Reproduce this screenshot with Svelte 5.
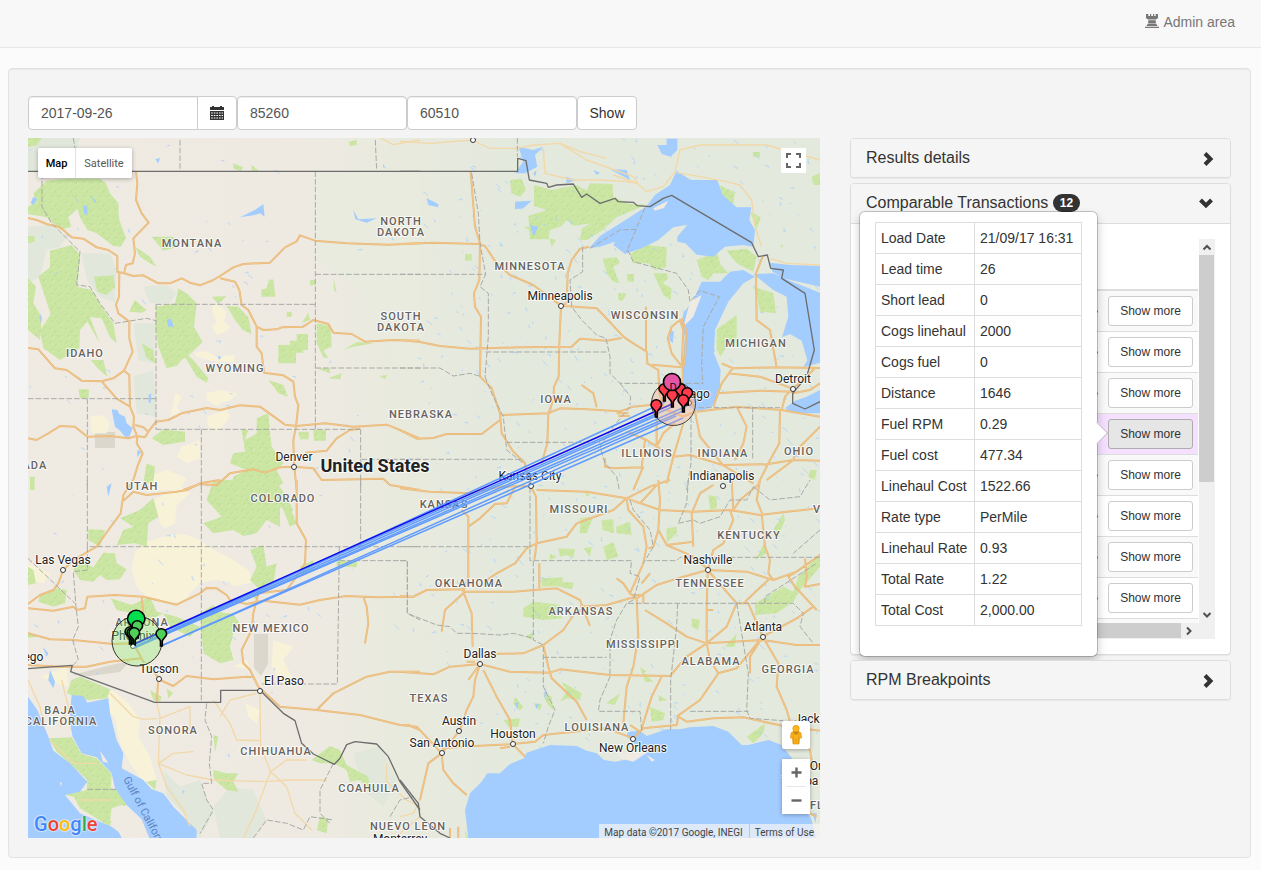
<script>
  const tiles = [
    'translate(0 130) scale(.33333)',
    'translate(400 130) scale(.33333)',
    'translate(0 480) scale(.33333)',
    'translate(400 480) scale(.33333)'
  ];

  const desert = [
    'M636 520L662 530 680 545 672 575 690 590 680 604 650 615 636 590 650 575 638 550ZM580 668L620 664 650 680 705 675 700 697 640 694 590 680ZM620 790L660 780 712 790 690 812 665 816 655 830 620 810ZM525 790L545 800 530 830 540 845 510 860 520 820ZM620 860L680 840 690 860 655 905 625 890ZM270 860L310 855 330 880 320 910 275 910ZM545 950L600 930 600 985 560 1000 530 980ZM440 1040L500 1020 560 1045 540 1080H450Z',
    '',
    'M405 215L440 185 520 162 560 165 600 180 640 210 690 235 745 270 760 305 700 320 690 305 640 300 600 310 570 340 550 370 500 365 440 350 410 320 395 270ZM460 60L540 20 570 40 530 75 525 130 495 145 480 130 470 90ZM290 640L340 632 385 670 420 720 415 770 450 830 470 900 430 905 390 850 360 790 345 715 315 680ZM700 560L740 540 750 570ZM820 480L880 500 850 540 880 600 840 600 815 560ZM120 590L200 560 205 620 170 610ZM735 670L780 690 770 730 745 710Z M84 250L150 280 130 310 84 300Z',
    ''
  ];
  const rough = [
    'M84 24L240 24 230 60 270 100 240 124 84 124ZM84 290L150 285 200 320 180 350 140 360 120 440 84 460ZM245 370L330 370 350 420 345 520 300 500 260 450ZM430 470L500 465 530 490 510 520 450 520ZM400 580L465 580 460 700 415 690ZM400 740L460 720 470 860 410 850Z',
    '',
    'M490 870L540 920 600 900 640 1000 600 1074 560 1010 500 950ZM690 920L760 930 800 1020 760 1074 660 1074 640 980ZM1060 820L1140 800 1190 900 1150 980 1090 930Z',
    ''
  ];
  const forest = [
    'M84 24H125L112 45 84 50ZM140 152L200 146 300 146 318 160 330 190 355 220 357 268 378 325 362 350 340 348 290 310 262 300 240 262 232 236 205 262 214 290 180 300 140 262 84 252 84 230 110 215 100 190ZM150 362L215 345 240 375 232 470 275 480 305 530 340 580 350 640 330 622 305 565 270 562 300 640 262 575 240 600 238 655 180 690 130 655 120 602 152 552 128 480 115 440 150 412ZM84 445L108 470 100 520 125 560 120 630 84 600ZM84 318H104V335L84 340ZM282 440L340 436 345 470 320 495 292 485ZM468 530L525 520 535 475 562 492 590 520 582 590 608 636 570 672 545 690 530 708 500 715 475 650 466 590ZM540 655L580 690 625 745 620 758 590 740ZM680 528L715 530 745 562 755 612 728 600 705 570ZM404 510L440 540 425 548 388 545ZM455 320L520 320 535 350 490 362ZM405 350L450 380 470 410 450 400 420 380ZM635 500L680 498 655 522ZM784 480L800 475 806 450 820 448 826 500 784 500ZM835 645H870V632H890V612H924V660H910V668H888V700H835ZM950 580L992 588 995 650 970 660 985 685 970 682 950 640ZM930 450H945V466H930ZM860 546H875V560H860ZM905 580L925 548 930 570ZM1000 440L1010 490 1002 480ZM1030 660L1070 636 1120 640 1060 650ZM950 715H990V730ZM985 745L1025 730 1020 748ZM1138 738L1162 735 1155 748ZM700 100L730 112 722 124 700 115ZM755 105L778 124H755ZM1045 35L1070 30 1070 45 1050 48ZM805 750L850 765 864 800 835 790ZM272 690L310 690 322 740 290 712ZM235 778H266V804H240ZM455 925L490 898 555 905 555 935 490 945ZM725 900H745L735 930 770 910 770 865 805 850 810 905 815 950 850 1000 830 1020 850 1060 810 1080H690L700 1040 740 1020 690 1000 700 970 735 965ZM895 905H926V928H900ZM940 900H978V932H942ZM440 1000L465 1010 460 1060 430 1060ZM90 1040H104V1080H90ZM425 640L460 660 466 700 440 685Z',
    'M330 150L365 146 378 180 360 200 334 190ZM402 165L455 180 530 165 560 182 570 160 638 162 640 200 690 222 738 224 650 262 608 300 560 330 540 330 545 296 572 280 520 288 500 270 482 290 450 300 445 328 390 328 385 258 440 240 402 228ZM448 325L468 330 455 350ZM370 290H388V300ZM608 386L650 382 660 398 640 410 658 460 640 455 620 430ZM690 372L740 345 800 352 798 412 765 420 745 400 700 400ZM760 430H800L805 445 788 460 815 475 812 510 790 495ZM680 432H702V455H684ZM655 490L680 490 668 512 655 510ZM890 390L950 365 962 405 985 430 940 430 925 450 905 440ZM980 362L1040 356 1070 380 1060 425 1010 400ZM950 598L1010 555 1010 640 985 640 962 680 950 660ZM1060 470L1120 490 1128 550 1080 545 1072 500ZM958 165L1005 188 1000 222 975 215ZM1050 245L1082 262 1070 300ZM1058 66H1080V82H1060ZM1235 140L1260 130V165H1240ZM195 372H215V392H195ZM760 235L805 212 790 232 762 242ZM1230 1020L1250 1020 1245 1050 1225 1040ZM1145 340L1150 350 1140 352Z',
    'M640 0H825L860 50 880 90 870 105 840 80 840 140 800 120 770 160 730 168 700 150 640 160 610 130 665 110 620 60ZM830 30L860 60 890 130 870 140 850 90ZM460 55L475 110 445 130 440 200 405 190 350 195 370 150 400 140 360 115 420 90ZM265 148L315 150 300 200 265 180ZM120 345L170 325 200 330 195 370 160 380 115 365ZM232 240L280 262 310 218 345 220 350 250 380 268 360 298 320 300 300 285 280 305 240 300 220 270ZM600 400L640 375 655 395 700 402 725 440 700 460 690 500 700 540 660 550 610 520ZM332 355L395 375 450 350 470 395 530 410 600 440 570 470 510 440 490 400 430 430 400 400 350 390ZM750 210L790 195 800 260 830 250 820 310 780 330 750 300 770 260ZM745 340L780 340 770 360ZM900 260L940 240 940 270 905 285ZM1010 240L1072 245 1070 262 1010 258ZM240 590L330 628 322 655 260 660 200 640 215 600ZM450 630L485 650 480 665 460 660ZM500 625L520 640 505 655ZM145 775L215 772 245 822 290 835 335 882 333 925 352 930 380 975 340 990 330 1040 240 985 222 950 195 945 260 930 262 900 210 850 170 815ZM84 260L100 270 108 310 84 315ZM640 870L680 880 715 880 700 905 715 935 680 930 650 905 640 890ZM640 765L655 770 645 815ZM935 840L990 798 1020 810 1040 855 1105 890 1110 930 1080 900 1050 905 1040 870 1000 850 960 850ZM960 1010L985 1015 980 1060 950 1050ZM300 812L325 850 310 845ZM440 905L470 900 465 930ZM84 455L110 470 84 475Z',
    'M540 115L580 110 560 160H540ZM605 120L640 118 642 160 608 150ZM648 140L690 125 695 165 650 160ZM475 205L525 208 520 235 500 225 480 230ZM550 205L575 200 570 230ZM610 200L640 185 655 230 620 240ZM450 222L470 230 450 240ZM425 295L490 292 485 305 522 308 515 328 470 318 425 320ZM370 385L400 365 445 370 480 375 470 400 490 415 430 420 370 410ZM375 470L400 455 396 480ZM345 650L370 680 360 690 340 672ZM310 720L360 715 355 740 325 740ZM485 605L545 640 540 660 500 655 480 665 500 635ZM430 640L455 650 460 690 440 670ZM400 670L425 672 420 692ZM618 670L660 640 645 675ZM750 680L795 700 790 720 755 725ZM775 645L800 660 778 665ZM725 570L760 605 735 605ZM875 415L900 420 895 450 875 440ZM800 145L830 140 830 160 800 190ZM925 45L950 50 950 85 930 90ZM1065 240L1095 185 1100 220ZM1120 150L1150 100 1155 120 1135 170ZM1065 370L1150 320 1180 335 1195 290 1260 220V260L1200 330 1180 365 1130 400 1065 405ZM975 500L1010 460 1005 500ZM1040 770L1095 730 1090 760 1060 790ZM555 35L570 45 560 50ZM195 1050L205 1074H198ZM720 560L740 575 725 580Z'
  ];
  const water = [
    'M335 838L352 840 358 852 375 860 380 880 398 895 388 920 375 920 358 900 345 890ZM250 225L262 230 262 256 252 250ZM100 200L112 208 100 225 92 220ZM768 238L790 222 794 260 780 250 760 256 720 262 740 252ZM446 795L454 790 452 820 446 816ZM500 570L512 566 522 590 505 590ZM412 960L424 965 412 982ZM466 88L480 84 475 100ZM270 195L290 215 285 218ZM1060 240L1075 268 1130 265 1100 278 1066 268ZM120 550L126 565 122 580ZM652 678L664 680 658 690ZM785 605L770 600Z',
    'M567 355L600 318 680 268 738 230 765 195 810 165 830 122 872 150 952 150 968 195 1010 232 1054 232 1048 270 1065 300 1060 350 1030 345 975 350 940 380 890 374 856 340 832 335 832 320 862 284 820 292 775 330 725 355 675 372 640 345 645 335 600 350ZM1065 440L1030 420 990 425 960 455 905 455 880 510 850 550 845 580 855 620 848 700 850 790 872 835 900 845 935 830 958 790 962 720 942 670 945 600 985 515 1030 460ZM1108 398L1170 405 1260 408V470L1150 445 1118 425ZM1060 432L1120 430 1150 445 1215 470 1260 488V698L1210 712 1222 690 1205 632 1170 612 1146 622 1165 560 1160 500 1120 480ZM1155 835L1185 812 1220 800 1260 780V850L1180 850ZM355 50L400 60 430 50 405 75 412 110 375 130 345 130 370 95ZM772 45H800V26H832V60L812 80 785 72ZM80 205L115 222 115 232 85 225ZM345 215L395 212 370 235 345 238ZM390 285L415 290 400 320ZM810 600L822 605 818 640 808 630ZM498 140L530 150 500 160ZM580 120L600 128 590 135ZM630 118L680 120 690 150ZM480 540L488 545ZM400 130L410 120 405 140Z',
    'M84 650L112 690 145 770 160 812 210 850 262 905 240 935 195 945 240 1000 335 1040 380 1074H84ZM215 645L250 648 262 668 325 655 330 700 350 780 370 820 365 865 430 900 455 928 490 940 520 980 590 1050 590 1074H448L425 1018 380 975 345 925 335 880 290 832 245 820 218 770 208 720ZM150 570L165 605 160 625 145 600ZM320 20L335 10 325 50ZM128 500L145 520 140 530ZM548 930L554 935 548 942ZM684 820L690 828 686 832Z',
    'M205 1074L195 990 210 940 245 905 262 880 300 880 330 852 372 835 380 818 450 795 530 798 560 812 590 820 612 840 645 845 700 835 725 820 700 785 680 770 684 755 720 752 740 768 800 748 840 748 870 742 940 738 985 755 1025 795 1045 795 1105 780 1145 795 1180 840 1200 950 1235 1020 1248 1074ZM345 670L355 665 352 690ZM405 675L418 670 410 688ZM435 625L442 640 432 655ZM1238 1000L1250 1000 1246 1030Z'
  ];
  const land = [
    '',
    'M870 515L905 495 880 560 850 590ZM760 235L805 212 792 234 764 242ZM1100 375L1112 380 1110 400 1100 398Z',
    'M368 840L385 838 385 860 372 868ZM180 905L186 910 182 920ZM300 812L325 848 308 845ZM335 985L365 975 405 1000 415 1040 445 1074H365L345 1035 330 1020Z',
    'M650 820L690 815 715 800 745 815 700 845 660 835ZM740 825L765 840 755 845Z'
  ];
  const minor = [
    'M1140 24L1180 44 1260 30',
    'M0 34L90 40 215 30 270 55 350 55 400 45 480 40 540 65 620 85M430 55L435 130 520 150 600 150 680 155 712 160M640 135L712 160 740 185 790 170 825 125 840 60 900 45 1100 45 1260 90M830 128L900 140 980 155 1020 165 1055 210 1065 290 1085 350M1110 385L1160 400 1260 405M480 40L560 90 700 140 714 160',
    'M470 665L480 710 475 850 560 885 640 900 800 905 860 900 980 900M330 640L400 710 430 718 475 715M640 660L690 730 710 780 782 782M770 640L690 660 660 710M780 640L782 800 812 875 800 905 765 1000 730 1074M812 875L860 920 885 1000 935 1050M475 850L500 920 550 990 570 1040M480 715L570 680 570 750M812 875L860 840 920 840M475 850L520 820 580 815M150 780L220 850 290 850M240 960L330 960M84 600L120 680 130 730M1160 850L1160 905 1220 960 1260 980M185 600L205 680 180 740',
    'M0 1010L40 1000 60 960M0 1060L60 1010'
  ];
  const roads = [
    'M84 264L110 270 140 282 180 292 215 322 250 326 290 352 325 360 352 378 352 425 372 430 400 438 430 436 475 460 510 460 545 445 570 458 600 466 640 450 660 438 700 412 730 402 810 398 855 352 890 334 900 316 945 332 1040 340 1165 344 1260 340M408 124L412 160 408 210 425 250 446 278 400 325 405 370 398 400 378 405 372 430M358 430L357 500 348 524 355 550 388 575 388 625 398 665 372 722 388 735 390 830 402 860 400 890 412 920 410 940 428 970 412 1010 400 1050M84 654L115 658 165 715 200 720 245 752 305 754 340 745 372 722M305 754L350 806 390 830M84 925L110 930 145 910 180 888 225 890 262 920 330 918 385 925 410 918 435 922 445 905 468 875 505 870 545 850 620 834 660 840 720 826 780 830 855 884 890 888 975 880 1060 890 1160 884 1200 900 1260 926M405 885L430 892 445 905M660 445L705 455 718 480 725 525 745 540 770 590 770 650 785 670 792 728 850 736 880 755 885 800 895 826 888 890 880 930 882 1000 890 1080M770 590L790 600 830 598 845 592 910 590 940 570 985 582 1000 608 1055 612 1095 635 1180 630 1260 632M915 968L980 962 1010 925 1050 900 1080 896M882 1010L940 1015 965 1050 1150 1046 1170 1065 1260 1080M882 1010L840 1012 795 1028 760 1018 690 1030 650 1066 600 1062 550 1080',
    'M0 342L100 338 235 342 255 348 290 400 330 435 400 465 440 495 483 527M0 630L60 636 120 648 210 656 360 652 515 650 540 626 620 632 665 624M212 124L218 200 225 290 240 340 238 450 222 490 225 530 243 560 240 740 275 775 300 850 305 910 340 965 375 1000 378 1020 392 1068M483 527L478 640 476 740 462 770 460 810 445 850 442 940 425 1000M567 350L540 356 515 390 503 430 500 520 483 527M483 527L590 535 610 555 670 620 700 640 740 665 742 700 775 720 778 790 790 830M738 530V665M755 704L845 712 850 600 840 570 815 590 803 625 815 670 842 705M845 565L858 600 856 680 848 720 850 800M305 855L445 850 480 835 560 838 660 844 700 830 750 825M0 900L50 926 100 924 140 912 245 912 300 870M545 765L580 790 590 832M680 905L740 930 770 950M890 845L1010 830 1145 840 1260 860M1140 840L1138 940 1105 1000 1075 1060M885 845L900 920 968 1005 1060 1060M968 1005L1100 1003 1180 990 1260 992M940 830L965 760 1000 712M965 700L1000 715 1130 712 1260 714M985 730L1080 740 1178 776M1130 712L1110 600 1070 570 1068 430 1088 380M950 790L1080 782 1178 785M1178 776L1155 800 1145 840M1178 776L1220 740 1245 714M770 850V950M850 880L820 980 800 1060M615 985V1010L640 1015 725 1012 735 930M730 1010L700 1080M770 950L820 980 870 975 968 1005M825 880L790 910 770 950M1260 890L1190 960 1180 990 1100 1050M1010 830L1040 890 1030 940 1005 990M870 800L885 845 850 860 800 840M1178 790L1230 780 1260 760M650 850H685M655 858H690',
    'M400 0L370 45 362 100 325 150 290 200 220 240 190 270 175 310 160 330 120 345 84 372M370 62L400 35 440 45 530 35 560 30 600 10 660 0M84 385L160 392 220 380 230 390 255 385 262 350 345 345 430 350 530 374 600 340 620 324 650 325 680 345 690 360 740 372 790 362 900 374 960 360 1040 348 1130 352 1240 350 1260 340M890 0L890 130 918 180 915 250 890 290 860 330 775 340 760 400 755 450 725 510 730 550 750 570 775 620 840 680 950 690 1080 705 1200 735 1225 735 1260 750M950 690L1000 640 1100 590 1170 575 1260 575M84 460L150 478 220 480 340 492 400 490 430 545 465 580 480 600 520 618 560 588 640 598 740 590 760 592 775 620M84 555L180 560 260 560 330 545 425 535M425 350L430 400 400 490M475 600L470 665M1090 350L1100 380 1105 430 1095 490',
    'M0 25L90 35 210 40 300 20 392 18M410 30L560 35 680 55 780 90 880 95 990 90 1080 105 1160 95 1260 85M185 90L205 110 205 290 190 335 215 400 218 500M205 140L240 115 285 72 320 70 345 20M392 18L408 50 410 190 403 240M410 190L500 170 530 130 640 90 680 55M410 190L380 205 345 250 290 280 260 300M0 348L40 350 80 330 190 328M190 335L340 335 405 330 470 325 540 360 555 400 570 438M418 250V325M540 380L620 375 690 355 710 355M190 340L135 390 125 455M680 55L685 90 730 140 740 200 730 250 690 340 710 355 715 470 700 560 680 620 670 730M725 310L750 280M650 295L670 310 690 340M775 0L780 60 775 150 760 200 745 205M775 150L800 195 880 230 920 265M680 55L750 20 810 0M680 55L720 70 775 10M0 575L100 583 150 560 240 552 330 575 450 578 480 568 630 585 810 588 860 530 920 490M270 522L370 520 430 495 445 560 455 595 530 665 560 720M430 495L490 450 520 405 550 385M240 552L225 600 220 650 200 690 180 750 125 820 85 850 60 960M250 570L290 650 330 720 338 792M125 820L130 870 160 910 200 945M0 735L50 740 125 820M125 805L225 798 338 792 405 785 430 765 570 750 620 745 700 775 730 745 830 735 835 710 860 725 940 715 1030 712 1150 738 1260 752M338 792L375 830M725 745L755 650 785 590M830 710L900 660 955 580 1010 565 1088 470M923 280L920 390 920 490 930 540 955 580M920 490L860 470 800 430 735 390M920 490L1088 480 1190 495 1260 495M710 355L770 315 850 290 923 270 1040 275 1120 300 1190 275 1260 225M990 90L1000 120 970 190 940 210 923 270M1085 100L1095 200 1110 240 1105 280 1120 300M923 270L1010 370 980 440 920 490M1010 370H1045L1088 470M1035 365L1110 295M1088 470L1135 550 1130 620 1160 690 1180 760 1230 810 1240 870M1088 470L1190 415 1240 380M1088 470L1050 530 1050 580M1190 275L1165 290 1185 320 1250 390M1215 235L1220 290 1215 320 1260 312M880 185L800 195M1000 90L995 0M1080 0L1070 60 1088 105M880 200L875 100 900 40 940 15M917 390H940M690 735L720 755M150 1074V1045M175 1074V1040M1080 10L1020 60 1000 90M700 345H730V370M200 545H225M240 552L205 600M300 805L330 800M1230 1000L1250 1010'
  ];
  const borders = [
    'M540 30V122M1126 30L1130 122M220 24L225 55M946 124V898M468 523H946M468 523V898M84 806H468M468 898H1082M262 806V1080M604 898V1080M1082 898V988H1260M946 714H1260M946 433H1260M1082 988V1080M126 130V230L155 280 180 305 240 365 230 465 270 470 300 520 345 580 440 565 468 572',
    'M0 433H257L240 470 265 490 265 620 255 740M257 666H622M0 714H120L160 738 210 730 245 740M215 130L235 250 240 340 257 433M548 350V425L510 450 515 530 545 570 590 615 618 625 630 680 630 730 660 760H910M660 760L692 800 690 825M690 830L640 890 600 950 615 1000 650 1040 658 1080M320 937H600M255 740L275 790 310 860 320 960 370 1000M0 988H370M683 360L700 395 830 430 865 480 870 515 900 482 958 500 910 590 905 700 908 760M873 860V1000L860 1080M1058 830V990M895 833H1140M352 24V80M570 355L660 300 708 298 735 232M708 298L680 365',
    'M262 0V200H1260M262 200V270L220 275 228 380 235 440 218 480 235 540 215 560M84 235L225 370M604 0V665M1082 0V200M1018 200L1012 612H780M1018 242H1222V400L1260 420M620 670L615 720 635 770 628 850 635 910 605 910 620 960 640 990 600 1060M262 928H350M1000 850L960 930 960 1000 990 1030M760 1074L800 1020 860 1030 910 1050 930 1010 1000 1020M1170 1010L1200 960 1240 950',
    'M0 200H390M390 0V242H695L690 280 720 290 700 360 680 370M400 242V480L430 495V620L465 690 445 740 430 790M0 242H22V400L110 435 150 440 170 460 215 460 300 465 340 460 400 475M430 532H620M680 370L650 420 630 480 630 590 600 660 595 694H720L725 750M685 370H1180L1210 400 1200 440 1240 490M833 370L830 440 812 600 812 750M1010 370L1045 580 1040 690 1050 715 1150 722M870 694H1045M740 242H830L840 232H1260M690 60L700 90 750 150 760 200 730 250M835 130L880 120 900 130 960 110 990 60 1040 60 1060 20M865 0L860 70 835 130M1060 20L1110 60 1200 50 1230 0M1095 370V350L1250 250M1260 150L1180 220'
  ];
  const nation = [
    'M84 124H1260',
    'M0 124H353V85L378 92 388 150 440 160 445 172 470 165 520 162 545 202 560 192 600 220 645 205 655 215 700 217 712 227 750 230 790 205 815 196 1055 338 1075 380 1102 375 1112 415 1150 420 1145 445 1215 490 1243 660 1220 740 1178 790 1178 820 1215 837 1260 815',
    'M84 566L217 556 212 575 464 667H662V631H780L850 700 885 722 905 790 940 822 1003 853 1020 835 1040 794 1065 785 1130 792 1165 830 1200 905 1260 990',
    'M0 900L55 970 60 1010 120 1060 150 1074'
  ];

  let seed = 11;
  const rnd = () => (seed = (seed * 16807) % 2147483647) / 2147483647;
  let creeks = '';
  for (let i = 0; i < 620; i++) {
    const x = i % 6 ? 420 + rnd() * 400 : 30 + rnd() * 400;
    const y = 138 + rnd() * (x > 460 ? 610 : 560);
    const dx = rnd() * 5 - 1;
    const dy = rnd() * 6 - 2;
    creeks += `M${x.toFixed(1)} ${y.toFixed(1)}l${dx.toFixed(1)} ${dy.toFixed(1)}l${(dy / 2).toFixed(1)} ${(dx / 2).toFixed(1)}`;
  }

  const under = [
    ['desert', desert], ['rough', rough], ['forest', forest]
  ];
  const over = [
    ['water', water], ['land', land], ['minor', minor],
    ['road-case', roads], ['road', roads], ['border', borders], ['nation', nation]
  ];

  const states = [
    ['MONTANA', 192, 247], ['NORTH', 401, 225], ['DAKOTA', 401, 236], ['SOUTH', 401, 320], ['DAKOTA', 401, 331],
    ['IDAHO', 85, 357], ['WYOMING', 235, 372], ['NEBRASKA', 421, 418], ['MINNESOTA', 530, 270], ['WISCONSIN', 645, 319],
    ['MICHIGAN', 756, 347], ['IOWA', 556, 403], ['ILLINOIS', 647, 457], ['INDIANA', 723, 457], ['OHIO', 799, 455],
    ['UTAH', 142, 490], ['COLORADO', 283, 502], ['KANSAS', 444, 508], ['MISSOURI', 579, 513], ['KENTUCKY', 749, 539],
    ['OKLAHOMA', 469, 587], ['ARKANSAS', 581, 615], ['TENNESSEE', 710, 587], ['MISSISSIPPI', 643, 648], ['ALABAMA', 711, 665],
    ['GEORGIA', 788, 673], ['ARIZONA', 142, 626], ['NEW MEXICO', 271, 632], ['TEXAS', 429, 702], ['LOUISIANA', 597, 731],
    ['BAJA', 60, 714], ['CALIFORNIA', 61, 725], ['SONORA', 173, 734], ['CHIHUAHUA', 276, 755], ['COAHUILA', 369, 792],
    ['NUEVO LEON', 408, 830], ['NEVADA', 23, 469], ['V', 817, 513], ['FL', 817, 809]
  ];
  const cities = [
    ['Minneapolis', 560, 300, 561, 306], ['Denver', 294, 461, 294, 467], ['Kansas City', 530, 480, 531, 486],
    ['Indianapolis', 722, 480, 723, 486], ['Detroit', 793, 383, 793, 389], ['Chicago', 688, 398, 689, 403],
    ['Las Vegas', 63, 564, 63, 570], ['Phoenix', 133, 640, 133, 646], ['Tucson', 159, 673, 159, 679],
    ['El Paso', 284, 685, 260, 691], ['Dallas', 480, 658, 480, 664], ['Austin', 459, 725, 459, 731],
    ['San Antonio', 442, 747, 442, 753], ['Houston', 513, 738, 513, 744], ['New Orleans', 633, 752, 633, 739],
    ['Nashville', 708, 564, 708, 570], ['Atlanta', 763, 631, 763, 637], ['Monterrey', 400, 843, 420, 860],
    ['Diego', 28, 661, 10, 668], ['', 0, 0, 473, 140], ['Jacks', 810, 723, 840, 723], ['Or', 816, 770, 840, 770], ['Tampa', 800, 785, 840, 785]
  ];

  const lanes = [
    [133, 648, 665, 402], [131, 646, 672, 407], [134, 647, 656, 416], [136, 647, 683, 411],
    [134, 648, 687, 406], [161, 646, 683, 418], [161, 646, 676, 416]
  ];
  const redPins = [[664, 389], [680, 389], [687, 393], [672, 395], [683, 400], [656, 405]];
  const greenPins = [[137, 626], [130, 632], [132, 633], [134, 633], [161, 634]];

  const details = [
    ['Load Date', '21/09/17 16:31'], ['Lead time', '26'], ['Short lead', '0'], ['Cogs linehaul', '2000'],
    ['Cogs fuel', '0'], ['Distance', '1646'], ['Fuel RPM', '0.29'], ['Fuel cost', '477.34'],
    ['Linehaul Cost', '1522.66'], ['Rate type', 'PerMile'], ['Linehaul Rate', '0.93'],
    ['Total Rate', '1.22'], ['Total Cost', '2,000.00']
  ];

  let date = $state('2017-09-26');
  let origin = $state('85260');
  let destination = $state('60510');
  let active = $state(3);
</script>

{#snippet chevron()}
  <svg class="chev" viewBox="0 0 14 16" aria-hidden="true"><path d="M4 2.500L9.500 8 4 13.500" /></svg>
{/snippet}

<nav>
  <a href="#admin">
    <svg width="14" height="14" viewBox="0 0 14 14" aria-hidden="true">
      <path fill="currentColor" d="M1 0H3.300V2H5V0H6.200V2H8V0H9.200V2H10.700V0H13V4L11 5.500H3L1 4ZM3.200 6.200H10.800V9H3.200ZM3 9.600H11L12.600 11.900H1.400ZM0 12.700H14V14H0Z" />
    </svg>
    Admin area
  </a>
</nav>

<main>
  <form onsubmit={(e) => e.preventDefault()}>
    <div class="date">
      <input type="text" aria-label="Date" bind:value={date} />
      <button type="button" aria-label="Open calendar">
        <svg width="14" height="14" viewBox="0 0 14 14" aria-hidden="true">
          <path fill="#333" d="M0 1H2V0H4V1H10V0H12V1H14V4H0ZM0 5H14V14H0Z" />
          <path stroke="#fff" stroke-dasharray="1.600 1" d="M1.200 7H13M1.200 9.500H13M1.200 12H13" />
        </svg>
      </button>
    </div>
    <input type="text" aria-label="Origin" bind:value={origin} />
    <input type="text" aria-label="Destination" bind:value={destination} />
    <button class="show" type="submit">Show</button>
  </form>

  <div class="row">
    <section class="col map-col">
      <div class="map">
        <svg class="canvas" viewBox="28 138 792 700" preserveAspectRatio="xMidYMid slice" role="img" aria-label="Map">
          <defs>
            <linearGradient id="ground" x1="0" x2="1" y1="0" y2="0">
              <stop offset="0" stop-color="#efebe3" />
              <stop offset=".36" stop-color="#eeeae2" />
              <stop offset=".46" stop-color="#e9eade" />
              <stop offset=".64" stop-color="#e3e9dd" />
              <stop offset="1" stop-color="#e3e9dd" />
            </linearGradient>
            <pattern id="wood" width="48" height="42" patternUnits="userSpaceOnUse">
              <rect width="48" height="42" fill="#cae6a2" />
              <path d="M4 10l7-6M20 20l6-9M36 8l5-4M8 32l8-6M32 36l7-9M26 30l3-3" stroke="#bedb95" stroke-width="3" fill="none" />
              <path d="M8 14l6-6M38 13l4-5M14 37l5-5M38 39l6-8" stroke="#d5ecb5" stroke-width="3" fill="none" />
            </pattern>
          </defs>
          <rect x="28" y="138" width="792" height="700" fill="url(#ground)" />
          <path d="M315 172H420V368H400L360 290 315 260Z" fill="#e8ebdf" opacity=".8" />
          <path d="M254 634h14v30l-7 12-7-8ZM72 675L115 664 130 661 120 672 90 676ZM95 432h20v16h-20z" fill="#dcd7cc" />
          {#each under as [name, parts]}
            {#each parts as d, i}<path class={name} {d} transform={tiles[i]} />{/each}
          {/each}
          <path class="creek" d={creeks} />
          {#each over as [name, parts]}
            {#each parts as d, i}<path class={name} {d} transform={tiles[i]} />{/each}
          {/each}
          {#each cities as [name, x, y, cx, cy]}
            <circle class="town" {cx} {cy} r="2.500" />
            <text class="city" {x} {y}>{name}</text>
          {/each}
          {#each states as [name, x, y]}<text class="state" {x} {y}>{name}</text>{/each}
          <text class="country" x="375" y="472">United States</text>
          <text class="sea" transform="translate(123 779) rotate(62)">Gulf of California</text>

          {#each lanes as [x1, y1, x2, y2]}<line class="lane" {x1} {y1} {x2} {y2} />{/each}
          <line class="lane main" x1="134" y1="644" x2="672" y2="404" />
          <circle cx="673.500" cy="403.500" r="22" fill="#ffb199" fill-opacity=".35" stroke="#444" />
          <circle cx="137" cy="641" r="25" fill="#8fee70" fill-opacity=".35" stroke="#333" />
          {#each redPins as [x, y]}
            <path class="pin" fill="#ff3b4d" d="M{x - 5} {y}a5.300 5.300 0 1 1 10.600 0c0 3-3.800 4.500-4.300 7v5h-1.800v-5c-.5-2.500-4.500-4-4.500-7z" />
          {/each}
          <circle class="pin" cx="672" cy="382" r="8.500" fill="#e456a5" />
          <text class="letter" x="673" y="391">D</text>
          <path class="pin" fill="#00e04f" d="M127.500 619a8.700 8.700 0 1 1 17.400 0c0 5-7 8-7.700 15h-2c-.7-7-7.700-10-7.700-15z" />
          {#each greenPins as [x, y]}
            <path class="pin" fill="#4fd159" d="M{x - 5} {y}a5.300 5.300 0 1 1 10.600 0c0 3-3.800 4.500-4.300 7v5h-1.800v-5c-.5-2.500-4.500-4-4.500-7z" />
          {/each}
          <circle cx="133" cy="646" r="1.500" fill="#fff" />
        </svg>

        <div class="types">
          <button type="button" class="on">Map</button><button type="button">Satellite</button>
        </div>
        <button type="button" class="full" aria-label="Toggle fullscreen">
          <svg width="15" height="15" viewBox="0 0 15 15" aria-hidden="true">
            <path d="M1 5V1H5M10 1H14V5M14 10V14H10M5 14H1V10" fill="none" stroke="#666" stroke-width="2" />
          </svg>
        </button>
        <div class="controls">
          <button type="button" class="peg" aria-label="Street View">
            <svg width="14" height="20" viewBox="0 0 14 20" aria-hidden="true">
              <path d="M4 6.500L10 6.500 12 8 12.500 13H10.500L10 19H4L3.500 13H1.500L2 8Z" fill="#fbb117" stroke="#d98c0c" stroke-width=".6" />
              <path d="M4 7H10L7 10ZM4.200 8L4.500 18M9.800 8L9.500 18M7 13V18" fill="#c77f12" stroke="#d9900f" stroke-width=".6" />
              <circle cx="7" cy="3.500" r="3.200" fill="#fcb81b" stroke="#d98c0c" stroke-width=".6" />
            </svg>
          </button>
          <div class="zoom">
            <button type="button" aria-label="Zoom in"><svg width="11" height="11" viewBox="0 0 11 11"><path d="M5.500 0.500V10.500M.5 5.500H10.500" stroke="#666" stroke-width="2.400" /></svg></button>
            <button type="button" aria-label="Zoom out"><svg width="11" height="11" viewBox="0 0 11 11"><path d="M.5 5.500H10.500" stroke="#666" stroke-width="2.400" /></svg></button>
          </div>
        </div>
        <a class="logo" href="#maps"><span class="b">G</span><span class="r">o</span><span class="y">o</span><span class="b">g</span><span class="g">l</span><span class="r">e</span></a>
        <div class="credits"><span>Map data ©2017 Google, INEGI</span><a href="#terms">Terms of Use</a></div>
      </div>
    </section>

    <section class="col side">
      <div class="panel">
        <button type="button" class="head">Results details {@render chevron()}</button>
      </div>
      <div class="panel open">
        <button type="button" class="head"><span>Comparable Transactions <b class="badge">12</b></span> {@render chevron()}</button>
        <div class="body">
          <div class="scroller">
            <div class="view">
              <table class="rows">
                <thead><tr><th></th></tr></thead>
                <tbody>
                  {#each Array(9) as _, i}
                    <tr class:active={i === active}>
                      <td>
                        <div class="cell">
                          {#if i !== active}<svg width="2" height="3" viewBox="0 0 2 3" aria-hidden="true"><circle cx=".8" cy="1.500" r="1.200" fill="#4ba3d6" /></svg>{/if}
                          <button type="button" onclick={() => (active = i)}>Show more</button>
                        </div>
                      </td>
                    </tr>
                  {/each}
                </tbody>
              </table>
            </div>
            <div class="vbar">
              <svg viewBox="0 0 16 16" aria-hidden="true"><path d="M4.500 10.500L8 7 11.500 10.500" /></svg>
              <i></i>
              <svg class="end" viewBox="0 0 16 16" aria-hidden="true"><path d="M4.500 6L8 9.500 11.500 6" /></svg>
            </div>
            <div class="hbar">
              <i></i>
              <svg viewBox="0 0 16 16" aria-hidden="true"><path d="M6 4.500L9.500 8 6 11.500" /></svg>
            </div>
          </div>
        </div>
        <div class="popover" role="tooltip">
          <table>
            <tbody>
              {#each details as [name, value]}
                <tr><td>{name}</td><td>{value}</td></tr>
              {/each}
            </tbody>
          </table>
        </div>
      </div>
      <div class="panel">
        <button type="button" class="head">RPM Breakpoints {@render chevron()}</button>
      </div>
    </section>
  </div>
</main>

<style>
  :global(body) { background: #fbfbfb; }
  :global(#app) { font: 14px/20px "Liberation Sans", Arial, sans-serif; color: #333; padding-bottom: 12px; }
  * { box-sizing: border-box; }
  button, input { font: inherit; color: inherit; margin: 0; }
  button { cursor: pointer; }

  nav { display: flex; justify-content: flex-end; align-items: center; height: 48px; padding: 0 26px 4px; background: #f8f8f8; border-bottom: 1px solid #e7e7e7; }
  nav a { display: flex; align-items: center; gap: 4px; color: #777; text-decoration: none; }
  nav svg { margin-bottom: 2px; }

  main { margin: 20px 10px 0 8px; padding: 27px 19px 19px; background: #f4f4f4; border: 1px solid #e3e3e3; border-radius: 4px; box-shadow: inset 0 1px 1px rgba(0, 0, 0, .05); }

  form { display: flex; margin-bottom: 8px; }
  input { width: 170px; height: 34px; padding: 6px 12px; border: 1px solid #ccc; border-radius: 4px; background: #fff; color: #555; box-shadow: inset 0 1px 1px rgba(0, 0, 0, .075); }
  .date { display: flex; }
  .date input { border-radius: 4px 0 0 4px; }
  .date button { display: flex; align-items: center; justify-content: center; width: 40px; margin-left: -1px; padding: 0; border: 1px solid #ccc; border-radius: 0 4px 4px 0; background: #fff; }
  .show { width: 60px; height: 34px; padding: 0; border: 1px solid #ccc; border-radius: 4px; background: #fff; }

  .row { display: flex; align-items: flex-start; margin: 0 -15px; }
  .col { padding: 0 15px; min-width: 0; }
  .map-col { width: 66.6667%; }
  .side { width: 33.3333%; }

  .map { position: relative; height: 700px; overflow: hidden; background: #e5e3df; font-family: Roboto, sans-serif; }
  .canvas { display: block; width: 100%; height: 100%; }
  .desert { fill: #f8f2d9; }
  .rough { fill: #dfe6da; opacity: .8; }
  .forest { fill: url(#wood); }
  .water { fill: #a3ccff; }
  .land { fill: #efebe3; }
  .creek { fill: none; stroke: #a9cffb; stroke-width: .7; }
  .minor { fill: none; stroke: #f2d8a8; stroke-width: 4; stroke-linejoin: round; }
  .road-case { fill: none; stroke: #e8b673; stroke-width: 6; stroke-linejoin: round; }
  .road { fill: none; stroke: #f5cf9b; stroke-width: 2; stroke-linejoin: round; }
  .border { fill: none; stroke: #a9aaa6; stroke-width: 3; stroke-dasharray: 17 6; }
  .nation { fill: none; stroke: #6d6d6d; stroke-width: 4; stroke-linejoin: round; }
  .town { fill: #fff; stroke: #333; }
  text { paint-order: stroke; stroke: rgba(255, 255, 255, .8); stroke-width: 2px; stroke-linejoin: round; text-anchor: middle; }
  .state { font-size: 11px; font-weight: 500; letter-spacing: 1px; fill: #66625d; }
  .city { font-size: 12px; fill: #222; }
  .country { font-size: 18px; font-weight: 700; fill: #222; }
  .sea { font-size: 11px; fill: #5c87c4; stroke: none; text-anchor: start; }
  .lane { stroke: #5f9bff; stroke-width: 1.5; }
  .lane.main { stroke: #0a0af0; }
  .pin { stroke: #000; stroke-width: 1.6; }
  .letter { font-size: 11px; fill: #111; stroke: none; }

  .map button { display: flex; align-items: center; justify-content: center; padding: 0; border: 0; background: #fff; }
  .types { position: absolute; left: 10px; top: 10px; display: flex; height: 30px; border-radius: 2px; box-shadow: 0 1px 4px rgba(0, 0, 0, .3); }
  .types button { width: 56px; padding-top: 1px; font-size: 11px; color: #565656; border-radius: 0 2px 2px 0; }
  .types .on { width: 38px; color: #000; font-weight: 500; border-right: 1px solid #e2e2e2; border-radius: 2px 0 0 2px; }
  .full { position: absolute; right: 14px; top: 10px; width: 25px; height: 25px; }
  .controls { position: absolute; right: 10px; bottom: 24px; width: 28px; display: grid; gap: 10px; }
  .peg, .zoom { border-radius: 2px; box-shadow: 0 1px 4px rgba(0, 0, 0, .3); }
  .peg { height: 28px; }
  .zoom { background: #fff; }
  .zoom button { width: 100%; height: 27px; }
  .zoom button + button { position: relative; height: 28px; }
  .zoom button + button::before { content: ""; position: absolute; left: 4px; right: 4px; top: 0; height: 1px; background: #e6e6e6; }
  .logo { position: absolute; left: 6px; bottom: 0; font: 500 20px/28px Roboto, sans-serif; text-decoration: none; text-shadow: 0 0 2px #fff, 0 0 2px #fff; }
  .b { color: #4285f4; } .r { color: #ea4335; } .y { color: #fbbc05; } .g { color: #34a853; }
  .credits { position: absolute; right: 0; bottom: 0; display: flex; height: 14px; font-size: 10px; line-height: 17px; color: #444; background: rgba(245, 245, 245, .7); }
  .credits > * { padding: 0 6px 0 5px; }
  .credits a { color: #444; text-decoration: none; border-left: 1px solid #a3ccff; }

  .panel { position: relative; margin-bottom: 5px; border: 1px solid #ddd; border-radius: 4px; background: #fff; box-shadow: 0 1px 1px rgba(0, 0, 0, .05); }
  .head { display: flex; justify-content: space-between; align-items: center; width: 100%; height: 38px; padding: 0 15px; border: 0; border-radius: 3px; background: #f5f5f5; font-size: 16px; text-align: left; }
  .open .head { height: 40px; padding-bottom: 2px; border-bottom: 1px solid #ddd; border-radius: 3px 3px 0 0; }
  .chev { width: 14px; height: 16px; margin-top: 2px; }
  .chev path { fill: none; stroke: #333; stroke-width: 4; }
  .open .chev { margin: 0 2px 0 0; transform: rotate(90deg); }
  .badge { display: inline-block; padding: 3px 7px; border-radius: 10px; background: #333; color: #fff; font-size: 12px; line-height: 12px; vertical-align: middle; }
  .body { padding: 15px; }
  .scroller { display: grid; grid-template: 384px 16px / minmax(0, 1fr) 16px; background: #f0f0f0; }
  .view { overflow: hidden; padding-right: 1px; background: #fff; }
  .rows { width: 100%; border-collapse: collapse; }
  .rows th { height: 51px; border-bottom: 2px solid #ddd; padding: 0; }
  .rows td { padding: 5px; border-top: 1px solid #ddd; }
  .rows tr:first-child td { border-top: 0; }
  .rows tbody tr:nth-child(odd) { background: #f9f9f9; }
  .rows tbody tr.active { background: #f5e0ff; }
  .cell { display: flex; justify-content: flex-end; align-items: center; gap: 10px; }
  .cell button { width: 85px; height: 30px; padding: 0; border: 1px solid #ccc; border-radius: 3px; background: #fff; font-size: 12px; line-height: 18px; }
  .rows .active button { background: #e6e6e6; border-color: #adadad; }
  .vbar { display: flex; flex-direction: column; }
  .vbar i { width: 15px; height: 227px; background: #cdcdcd; }
  .vbar svg, .hbar svg { width: 16px; height: 16px; fill: none; stroke: #505050; stroke-width: 2; }
  .vbar .end { margin-top: auto; }
  .hbar { display: flex; }
  .hbar i { flex: 1; height: 15px; margin-left: 16px; background: #cdcdcd; }
  .hbar svg { margin-right: 2px; }

  .popover { position: absolute; right: 132px; top: 27px; padding: 10px 15px 30px; border: 1px solid rgba(0, 0, 0, .2); border-radius: 6px; background: #fff; background-clip: padding-box; box-shadow: 0 5px 10px rgba(0, 0, 0, .2); white-space: nowrap; }
  .popover::after { content: ""; position: absolute; right: -8px; top: 213px; width: 15px; height: 15px; background: #fff; border: solid #cbbdd2; border-width: 1px 1px 0 0; transform: rotate(45deg); }
  .popover table { width: 207px; border-collapse: collapse; }
  .popover td { padding: 5px; border: 1px solid #ddd; }
  .popover td:first-child { width: 99px; }
</style>
